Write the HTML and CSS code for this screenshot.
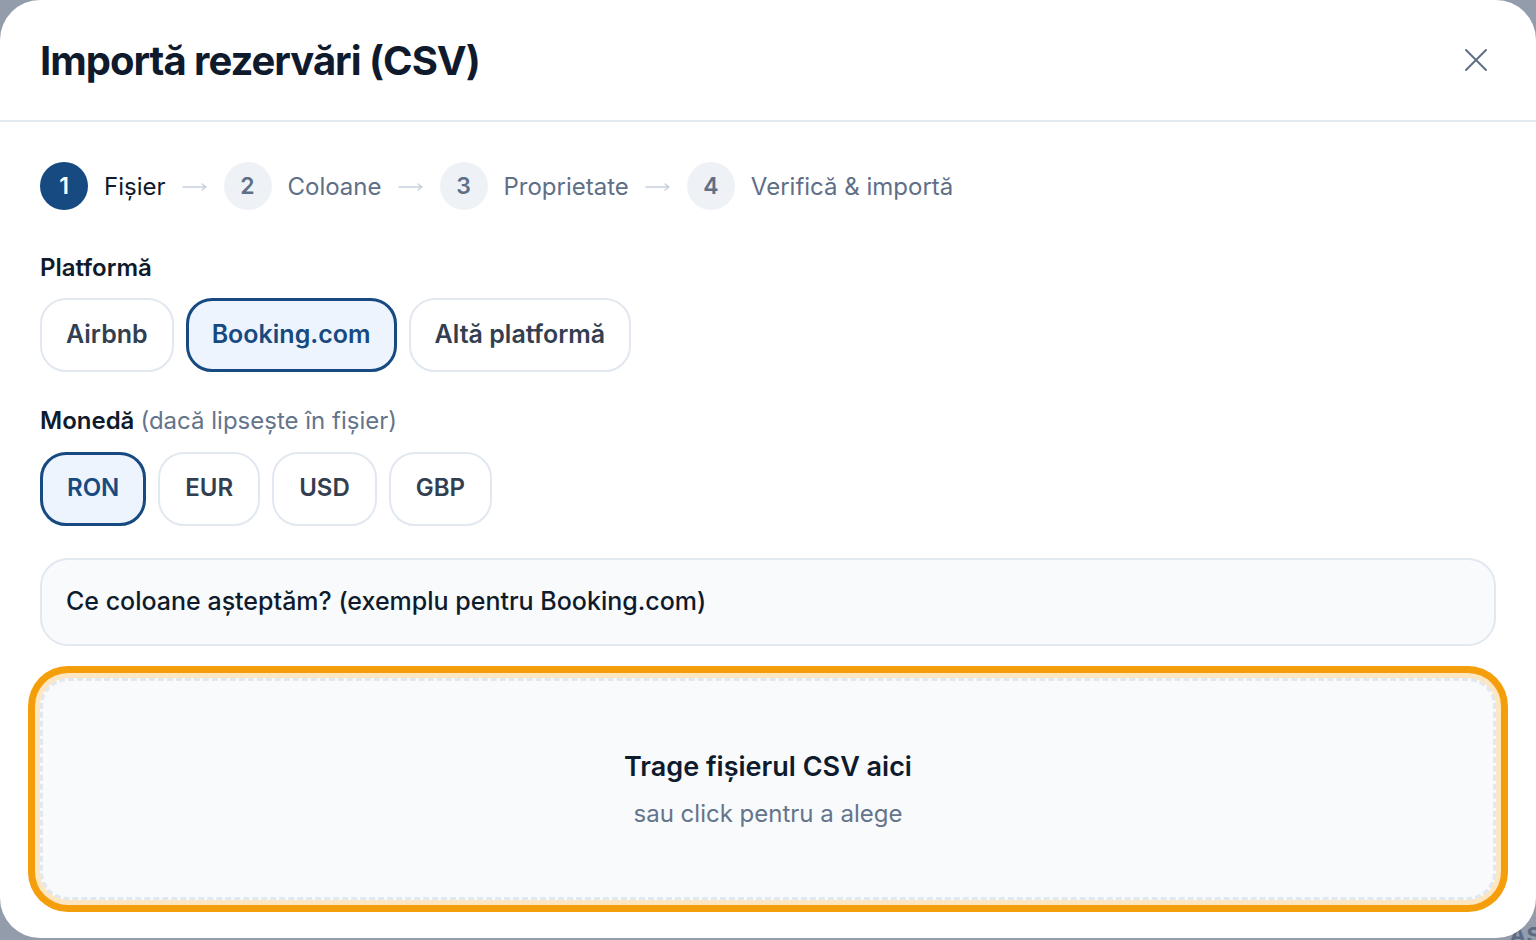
FILE: index.html
```html
<!DOCTYPE html>
<html>
<head>
  <title>Importă rezervări (CSV)</title>
  <link rel="stylesheet" href="styles.css">
</head>
<body>

  <div class="backdrop-text">AS</div>

  <div class="modal">
    <div class="modal-header">
      <h2>Importă rezervări (CSV)</h2>
      <button class="close-btn" aria-label="Închide">
        <svg width="24" height="24" viewBox="0 0 24 24" fill="none" stroke="currentColor" stroke-width="2" stroke-linecap="round">
          <path d="M2 2 L22 22 M22 2 L2 22"/>
        </svg>
      </button>
    </div>

    <div class="modal-body">
      <div class="stepper">
        <span class="step-num active">1</span>
        <span class="step-label active">Fișier</span>
        <svg class="step-arrow" width="26" height="12" viewBox="0 0 26 12" fill="none" stroke="currentColor" stroke-width="1.3" stroke-linecap="round" stroke-linejoin="round"><path d="M1 6 H24 M20 3 L24 6 L20 9"/></svg>
        <span class="step-num">2</span>
        <span class="step-label">Coloane</span>
        <svg class="step-arrow" width="26" height="12" viewBox="0 0 26 12" fill="none" stroke="currentColor" stroke-width="1.3" stroke-linecap="round" stroke-linejoin="round"><path d="M1 6 H24 M20 3 L24 6 L20 9"/></svg>
        <span class="step-num">3</span>
        <span class="step-label">Proprietate</span>
        <svg class="step-arrow" width="26" height="12" viewBox="0 0 26 12" fill="none" stroke="currentColor" stroke-width="1.3" stroke-linecap="round" stroke-linejoin="round"><path d="M1 6 H24 M20 3 L24 6 L20 9"/></svg>
        <span class="step-num">4</span>
        <span class="step-label">Verifică &amp; importă</span>
      </div>

      <div class="field-label first">Platformă</div>
      <div class="chips platform">
        <button class="chip">Airbnb</button>
        <button class="chip selected">Booking.com</button>
        <button class="chip">Altă platformă</button>
      </div>

      <div class="field-label">Monedă <span class="hint">(dacă lipsește în fișier)</span></div>
      <div class="chips currency">
        <button class="chip selected">RON</button>
        <button class="chip">EUR</button>
        <button class="chip">USD</button>
        <button class="chip">GBP</button>
      </div>

      <div class="info-box">Ce coloane așteptăm? (exemplu pentru Booking.com)</div>

      <div class="drop-zone">
        <div class="drop-title">Trage fișierul CSV aici</div>
        <div class="drop-sub">sau click pentru a alege</div>
      </div>
    </div>
  </div>

</body>
</html>
```

FILE: styles.css
```css
body {
  font-family: Inter, 'Noto Sans', sans-serif;
  background: #939cab;
  margin: 0;
  height: 940px;
  overflow: hidden;
  position: relative;
}

.backdrop-text {
  position: absolute;
  right: -6px;
  bottom: -8px;
  font-size: 22px;
  font-weight: 700;
  color: #5b6b85;
  letter-spacing: 1px;
}

.modal {
  position: relative;
  width: 1536px;
  height: 938px;
  background: #fff;
  border-radius: 40px;
  overflow: hidden;
}

.modal-header {
  height: 120px;
  padding: 0 40px;
  border-bottom: 2px solid #e2e8f0;
  display: flex;
  align-items: center;
  justify-content: space-between;
}

.modal-header h2 {
  margin: 0;
  font-size: 40px;
  font-weight: 700;
  color: #0f1b2d;
  letter-spacing: -1px;
}

.close-btn {
  width: 40px;
  height: 40px;
  border: none;
  background: none;
  padding: 0;
  color: #5f6f86;
  display: flex;
  align-items: center;
  justify-content: center;
  cursor: pointer;
}

.modal-body {
  padding: 40px 40px 0 40px;
}

.stepper {
  display: flex;
  align-items: center;
  gap: 16px;
  height: 48px;
}

.step-num {
  width: 48px;
  height: 48px;
  border-radius: 50%;
  background: #eef2f7;
  color: #5f6f86;
  font-size: 23px;
  font-weight: 600;
  display: flex;
  align-items: center;
  justify-content: center;
}

.step-num.active {
  background: #164a80;
  color: #fff;
}

.step-label {
  font-size: 24px;
  color: #5f6f86;
}

.step-label.active {
  color: #0f1b2d;
}

.step-arrow {
  color: #c5cfdc;
  margin-top: 1px;
}

.field-label {
  margin-top: 34px;
  font-size: 24px;
  line-height: 30px;
  font-weight: 600;
  color: #0f1b2d;
}

.field-label.first {
  margin-top: 43px;
}

.field-label .hint {
  font-weight: 400;
  color: #64748b;
}

.chips {
  display: flex;
  gap: 12px;
  margin-top: 15px;
}

.chips.currency {
  margin-top: 16px;
}

.chip {
  height: 74px;
  padding: 0 25px 3px;
  border: 2px solid #e2e8f0;
  border-radius: 26px;
  background: #fff;
  font-family: inherit;
  font-size: 24px;
  font-weight: 600;
  color: #333f51;
  cursor: pointer;
}

.chip.selected {
  border: 3px solid #164a80;
  padding: 0 24px 3px;
  background: #eef4fd;
  color: #164a80;
}

.platform .chip {
  font-size: 25px;
  padding: 0 24px 3px;
}

.platform .chip.selected {
  padding: 0 23px 3px;
}

.info-box {
  margin-top: 32px;
  height: 88px;
  box-sizing: border-box;
  border: 2px solid #e2e8f0;
  border-radius: 28px;
  background: #f8fafc;
  padding: 0 24px 2px;
  display: flex;
  align-items: center;
  font-size: 25px;
  font-weight: 500;
  color: #0f1b2d;
}

.drop-zone {
  margin-top: 32px;
  height: 222px;
  box-sizing: border-box;
  border: 3px dashed #e2e8f0;
  border-radius: 28px;
  background: #f8fafc;
  box-shadow: 0 0 0 5px #fde6c2, 0 0 0 12px #f59e0b;
  display: flex;
  flex-direction: column;
  align-items: center;
  justify-content: center;
  gap: 16px;
  padding-top: 2px;
}

.drop-title {
  font-size: 27px;
  line-height: 32px;
  font-weight: 600;
  color: #0f1b2d;
}

.drop-sub {
  font-size: 24px;
  line-height: 30px;
  color: #64748b;
}
```
